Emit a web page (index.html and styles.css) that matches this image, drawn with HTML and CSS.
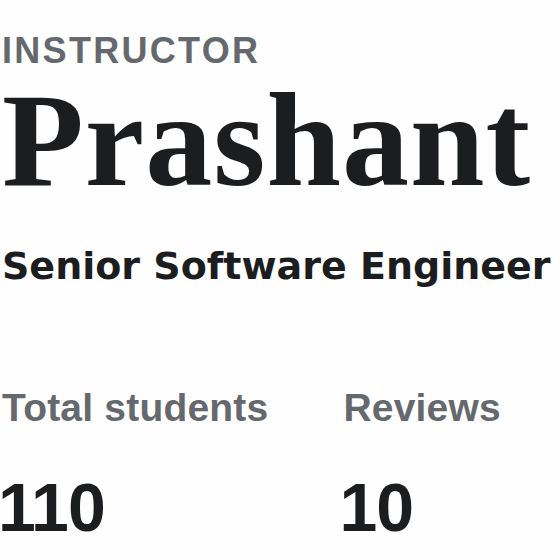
FILE: index.html
```html
<!DOCTYPE html>
<html lang="en">
<head>
    <meta charset="UTF-8">
    <meta name="viewport" content="width=device-width, initial-scale=1.0">
    <title>Instructor - Prashant</title>
    <link rel="stylesheet" href="styles.css">
</head>
<body>
    <div class="profile">
        <!-- Header -->
        <div class="eyebrow">INSTRUCTOR</div>
        <h1 class="name">Prashant Kumar</h1>
        <h2 class="headline">Senior Software Engineer</h2>

        <!-- Stats -->
        <div class="stats">
            <div class="stat">
                <div class="stat-label">Total students</div>
                <div class="stat-value">110</div>
            </div>
            <div class="stat">
                <div class="stat-label">Reviews</div>
                <div class="stat-value">10</div>
            </div>
        </div>
    </div>
</body>
</html>
```

FILE: styles.css
```css
body {
    margin: 0;
    padding: 0;
    background-color: #fefefe;
    color: #1c1d1f;
    font-family: 'Liberation Sans', Arial, sans-serif;
    overflow: hidden;
}

.profile {
    padding: 31px 0 0 2px;
    white-space: nowrap;
}

.eyebrow {
    font-size: 36px;
    line-height: 40px;
    font-weight: bold;
    letter-spacing: 2.3px;
    color: #65696d;
}

.name {
    margin: 2px 0 0 0;
    font-family: 'Liberation Serif', 'Times New Roman', serif;
    font-size: 134px;
    line-height: 134px;
    font-weight: bold;
    letter-spacing: 1px;
    color: #1c1d1f;
}

.headline {
    margin: 37px 0 0 0;
    font-family: 'DejaVu Sans', sans-serif;
    font-size: 38px;
    line-height: 44px;
    font-weight: bold;
    color: #1c1d1f;
}

.stats {
    display: flex;
    gap: 75px;
    margin-top: 98px;
}

.stat-label {
    font-size: 39px;
    line-height: 44px;
    font-weight: bold;
    letter-spacing: 0.2px;
    color: #65696d;
}

.stat-value {
    margin: 43px 0 0 -4px;
    font-size: 68px;
    line-height: 68px;
    font-weight: bold;
    letter-spacing: -1px;
    color: #1c1d1f;
}
```
